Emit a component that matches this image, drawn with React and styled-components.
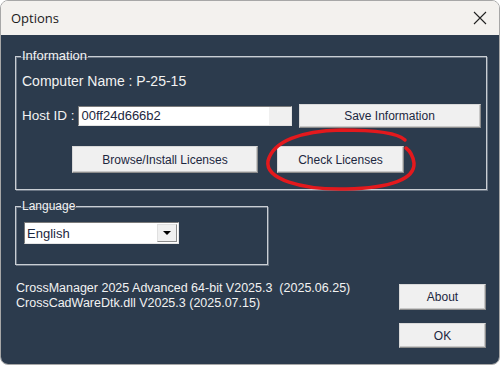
import React from "react";
import styled, { createGlobalStyle } from "styled-components";

const Global = createGlobalStyle`
  html, body { margin: 0; padding: 0; background: #ffffff; }
  body { font-family: "Liberation Sans", Arial, sans-serif; }
  * { box-sizing: border-box; }
`;

const Window = styled.div`
  width: 500px;
  height: 365px;
  border: 1px solid #a7a7a7;
  border-radius: 8px;
  overflow: hidden;
  display: flex;
  flex-direction: column;
  position: relative;
`;

const TitleBar = styled.div`
  height: 34px;
  flex: none;
  background: #f3f1ee;
  display: flex;
  align-items: center;
  justify-content: space-between;
  padding: 0 12px 0 10px;
`;

const Title = styled.span`
  font-family: "Open Sans", "Noto Sans", sans-serif;
  font-size: 13px;
  color: #1a1a1a;
`;

const CloseIcon = styled.svg`
  width: 14px;
  height: 14px;
`;

const Content = styled.div`
  flex: 1;
  background: #2c3b4d;
  padding: 13px 13px 0 14px;
  display: flex;
  flex-direction: column;
  position: relative;
  font-family: "Liberation Sans", Arial, sans-serif;
  font-size: 13px;
  color: #f2f2f2;
`;

const Group = styled.fieldset`
  margin: 0;
  width: ${(p) => p.$width};
  border: 1px solid #c9ced4;
  box-shadow: inset 1px 1px 0 #6b7684, 1px 1px 0 #6b7684;
  padding: ${(p) => p.$pad};
  display: flex;
  flex-direction: column;
  align-items: flex-start;
  min-width: 0;
`;

const Legend = styled.legend`
  padding: 0 1px;
  margin-left: -1px;
  font-size: ${(p) => p.$size || 13}px;
  line-height: 16px;
  color: #f2f2f2;
`;

const Label = styled.div`
  font-size: ${(p) => p.$size || 13}px;
  line-height: 16px;
  white-space: nowrap;
`;

const Row = styled.div`
  display: flex;
  align-items: center;
  gap: ${(p) => p.$gap || 0}px;
  margin-top: ${(p) => p.$mt || 0}px;
  margin-left: ${(p) => p.$ml || 0}px;
`;

const TextBox = styled.div`
  width: 214px;
  height: 20px;
  margin-left: 3px;
  border-top: 1px solid #7a7a7a;
  border-left: 1px solid #7a7a7a;
  border-right: 1px solid #e3e3e3;
  border-bottom: 1px solid #e3e3e3;
  background: linear-gradient(to right, #ffffff 0, #ffffff 190px, #f0f0f0 190px);
  color: #1c2740;
  line-height: 18px;
  padding-left: 3px;
  font-size: 13px;
`;

const Button = styled.button`
  width: ${(p) => p.$w}px;
  height: ${(p) => p.$h}px;
  margin-left: ${(p) => p.$ml || 0}px;
  background: #f0f0f0;
  border: 1px solid #d9d9d9;
  border-right-color: #8c8c8c;
  border-bottom-color: #8c8c8c;
  box-shadow: inset -1px -1px 0 #c8c8c8;
  font-family: "Liberation Sans", Arial, sans-serif;
  font-size: 12px;
  color: #1c2740;
  padding: 0;
  flex: none;
`;

const Select = styled.div`
  width: 155px;
  height: 22px;
  margin-top: 8px;
  margin-left: 2px;
  border-top: 1px solid #7a7a7a;
  border-left: 1px solid #7a7a7a;
  border-right: 1px solid #e6e6e6;
  border-bottom: 1px solid #e6e6e6;
  background: #ffffff;
  display: flex;
  align-items: center;
  justify-content: space-between;
  padding: 1px 1px 1px 2px;
  color: #1c2740;
`;

const DropButton = styled.div`
  width: 20px;
  height: 18px;
  background: #f0f0f0;
  border: 1px solid #e0e0e0;
  border-right-color: #8c8c8c;
  border-bottom-color: #8c8c8c;
  display: flex;
  align-items: center;
  justify-content: center;
`;

const Arrow = styled.div`
  width: 0;
  height: 0;
  border-left: 4px solid transparent;
  border-right: 4px solid transparent;
  border-top: 4px solid #000;
`;

const Bottom = styled.div`
  display: flex;
  justify-content: space-between;
  margin-top: 16px;
  padding-left: 1px;
`;

const Versions = styled.div`
  font-size: 12.5px;
  line-height: 15px;
  white-space: pre;
`;

const ButtonColumn = styled.div`
  display: flex;
  flex-direction: column;
  gap: 13px;
  margin-top: 3px;
`;

const Annotation = styled.svg`
  position: absolute;
  left: 0;
  top: 0;
  width: 500px;
  height: 366px;
  pointer-events: none;
`;

export default function App() {
  return (
    <>
      <Global />
      <Window>
        <TitleBar>
          <Title>Options</Title>
          <CloseIcon viewBox="0 0 14 14">
            <path d="M1 1 L13 13 M13 1 L1 13" stroke="#222" strokeWidth="1.1" fill="none" />
          </CloseIcon>
        </TitleBar>
        <Content>
          <Group $width="472px" $pad="9px 4px 16px 6px">
            <Legend>Information</Legend>
            <Label $size={14}>Computer Name : P-25-15</Label>
            <Row $mt={15}>
              <Label $size={13.5}>Host ID :</Label>
              <TextBox>00ff24d666b2</TextBox>
              <Button $w={182} $h={24} $ml={7}>Save Information</Button>
            </Row>
            <Row $mt={18} $ml={50} $gap={19}>
              <Button $w={186} $h={27}>Browse/Install Licenses</Button>
              <Button $w={127} $h={27}>Check Licenses</Button>
            </Row>
          </Group>
          <Group $width="253px" $pad="0 6px 20px 6px" style={{ marginTop: 8 }}>
            <Legend $size={12}>Language</Legend>
            <Select>
              <span>English</span>
              <DropButton>
                <Arrow />
              </DropButton>
            </Select>
          </Group>
          <Bottom>
            <Versions>
              {"CrossManager 2025 Advanced 64-bit V2025.3  (2025.06.25)\nCrossCadWareDtk.dll V2025.3 (2025.07.15)"}
            </Versions>
            <ButtonColumn>
              <Button $w={87} $h={26}>About</Button>
              <Button $w={87} $h={25}>OK</Button>
            </ButtonColumn>
          </Bottom>
        </Content>
        <Annotation viewBox="0 0 500 366">
          <path
            d="M404 139 C 398 133, 380 129, 340 129 C 300 130, 272 140, 267 160 C 264 178, 300 189, 345 188 C 390 187, 414 178, 413 162 C 412 155, 409 150, 405 147"
            stroke="#e3191d"
            strokeWidth="3.5"
            fill="none"
            strokeLinecap="round"
          />
        </Annotation>
      </Window>
    </>
  );
}
